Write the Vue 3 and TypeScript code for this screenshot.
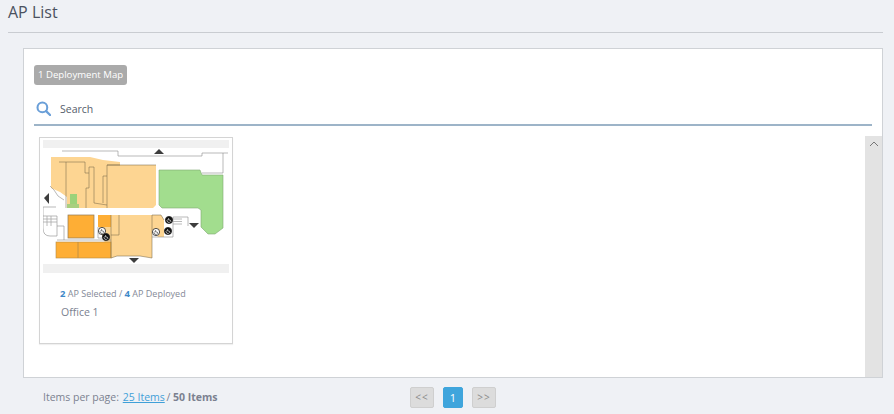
<script setup lang="ts">
const selected = 2
const deployed = 4

// floor plan shapes, coordinates are page pixels of the thumbnail
const lightRooms = [
  '51,157 90,157 103,160 120,162 120,165 156,165 156,205 153,208 67,208 67,197 60,192 51,188',
  '98,225 111,225 111,215 152,215 152,258 140,256 117,256 111,258',
  '152,215 161,215 164,220 164,237 158,237 152,230',
]
const brownWalls = [
  'M59 162H85V173H89M66 162V208M94 167V203M89 173V188H86V208M94 167H89V173',
  'M103 176H107V165H120M103 176V203M94 203L107 205M107 176V208M107 165H156',
  'M111 235H119V215M111 215V258M152 215V258M111 258L117 256H140L152 258M152 215H161L164 220',
]
const outerWalls = [
  'M62 151H118V156H202V153H228M223 153V173H202',
  'M43 207H56M43 207V228Q43 236 50 236H57V226H64V240',
  'M43 216H57V226M57 240H111M98 227V238H110M152 237H173V217H188V226',
  'M50 186L54 190L58 196L64 200',
]
const stairs = [
  { x1: 47, y1: 216, x2: 47, y2: 226 },
  { x1: 51, y1: 216, x2: 51, y2: 226 },
  { x1: 43, y1: 219, x2: 57, y2: 219 },
  { x1: 43, y1: 222, x2: 57, y2: 222 },
  { x1: 173, y1: 219, x2: 182, y2: 219 },
  { x1: 173, y1: 221.5, x2: 182, y2: 221.5 },
  { x1: 173, y1: 224, x2: 182, y2: 224 },
]
const darkArrows = [
  '159,149 154,154 164,154',
  '44,198 49,193 49,204',
  '189,223 199,223 194,228',
  '129,258 139,258 134,263',
]
const icons = [
  { x: 102, y: 231, dark: false },
  { x: 106, y: 237, dark: true },
  { x: 156, y: 232, dark: false },
  { x: 168, y: 231, dark: true },
  { x: 169, y: 220, dark: true },
]
</script>

<template>
  <div class="page">
    <h1 class="title">AP List</h1>
    <div class="panel">
      <span class="badge">1 Deployment Map</span>
      <div class="search">
        <svg class="search-icon" viewBox="0 0 16 16" width="15" height="15">
          <circle cx="6.8" cy="6.8" r="5.2" fill="none" stroke="#6a9fd8" stroke-width="2.2" />
          <path d="M10.8 10.8L15 15" stroke="#6a9fd8" stroke-width="2.4" stroke-linecap="round" />
        </svg>
        <span>Search</span>
      </div>
      <div class="list">
        <div class="cards">
          <div class="card">
            <svg class="map" viewBox="43 140 186 133" width="186" height="133">
              <defs>
                <filter id="soft"><feGaussianBlur stdDeviation="0.35" /></filter>
              </defs>
              <rect x="43" y="140" width="186" height="8" fill="#f0f0f0" />
              <rect x="43" y="264" width="186" height="9" fill="#f0f0f0" />
              <g filter="url(#soft)">
                <polygon v-for="p in lightRooms" :key="p" :points="p" fill="#fdd592" />
                <polygon points="159,170 200,170 202,175 223,175 223,228 215,234 208,234 201,227 201,210 198,208 162,208 159,205" fill="#a2dd8e" stroke="#7fa874" stroke-width="0.6" />
                <rect x="68" y="215" width="26" height="23" fill="#feae36" stroke="#8f7a52" stroke-width="0.7" />
                <rect x="56" y="242" width="55" height="16" fill="#feae36" stroke="#b58a45" stroke-width="0.6" />
                <path d="M78 242V258" stroke="#b58a45" stroke-width="0.8" />
                <rect x="98" y="215" width="13" height="12" fill="#feae36" />
                <rect x="70" y="194" width="7" height="10" fill="#9cd27a" />
                <rect x="67" y="204" width="12" height="4" fill="#a9cf7f" />
                <path v-for="d in brownWalls" :key="d" :d="d" fill="none" stroke="#7a6a4a" stroke-width="0.55" />
                <path v-for="d in outerWalls" :key="d" :d="d" fill="none" stroke="#8c8c8c" stroke-width="0.6" />
                <line v-for="s in stairs" :key="`${s.x1}-${s.y1}`" v-bind="s" stroke="#a8a8a8" stroke-width="0.8" />
                <polygon v-for="a in darkArrows" :key="a" :points="a" fill="#3c3c3c" />
                <template v-for="i in icons" :key="`${i.x}-${i.y}`">
                  <circle :cx="i.x" :cy="i.y" r="3.6" :fill="i.dark ? '#111' : '#fff'" stroke="#222" stroke-width="0.8" />
                  <path :d="`M${i.x - 1.2} ${i.y - 0.6}a1.7 1.7 0 1 0 2.6 2M${i.x - 0.4} ${i.y - 2}v2h1.6l0.8 1.6`" fill="none" :stroke="i.dark ? '#fff' : '#333'" stroke-width="0.6" />
                </template>
              </g>
            </svg>
            <div class="counts">
              <b>{{ selected }}</b> AP Selected / <b>{{ deployed }}</b> AP Deployed
            </div>
            <div class="name">Office 1</div>
          </div>
        </div>
        <div class="scrollbar">
          <svg viewBox="0 0 10 6" width="10" height="6">
            <path d="M1 5L5 1L9 5" fill="none" stroke="#777" stroke-width="1" />
          </svg>
        </div>
      </div>
    </div>
    <div class="footer">
      <div class="per-page">
        Items per page: <a class="link">25 Items</a> / <b>50 Items</b>
      </div>
      <div class="pager">
        <button class="pg" type="button">&lt;&lt;</button>
        <button class="pg active" type="button">1</button>
        <button class="pg" type="button">&gt;&gt;</button>
      </div>
    </div>
  </div>
</template>

<style scoped>
.page {
  height: 414px;
  box-sizing: border-box;
  padding: 0 11px 0 8px;
  overflow: hidden;
  background: #eff1f5;
  font-family: "Open Sans", sans-serif;
  color: #7b8190;
}

.title {
  margin: 0;
  height: 33px;
  box-sizing: border-box;
  padding-top: 2px;
  border-bottom: 1px solid #c9ccd1;
  font-size: 16px;
  line-height: 20px;
  font-weight: 400;
  color: #4b5160;
}

.panel {
  display: flex;
  flex-direction: column;
  align-items: stretch;
  height: 330px;
  box-sizing: border-box;
  margin: 15px 0 0 15px;
  padding: 16px 0 0 10px;
  background: #fff;
  border: 1px solid #cfd2d6;
}

.badge {
  align-self: flex-start;
  height: 20px;
  padding: 0 4px;
  border-radius: 3px;
  background: #aaaaaa;
  color: #fff;
  font-size: 9.6px;
  line-height: 20px;
  white-space: nowrap;
}

.search {
  display: flex;
  align-items: center;
  gap: 9px;
  height: 41px;
  margin-right: 10px;
  padding-left: 2px;
  border-bottom: 2px solid #9db4c8;
  box-sizing: border-box;
  padding-top: 8px;
  font-size: 10.5px;
  color: #555d6b;
}

.search-icon {
  flex: none;
}

.list {
  flex: 1;
  display: flex;
  min-height: 0;
  margin-top: 10px;
}

.cards {
  flex: 1;
  padding: 1px 0 0 5px;
}

.card {
  width: 194px;
  height: 207px;
  box-sizing: border-box;
  padding-top: 2px;
  padding-left: 3px;
  background: #fff;
  border: 1px solid #d4d4d4;
  box-shadow: 0 1px 1px rgba(0, 0, 0, 0.06);
}

.map {
  display: block;
}

.counts {
  margin: 15px 0 0 17px;
  font-size: 9px;
  line-height: 12px;
  color: #858a97;
}

.counts b {
  color: #3f88c8;
  font-size: 9.5px;
}

.name {
  margin: 5px 0 0 18px;
  font-size: 10.5px;
  line-height: 14px;
  color: #7b8190;
}

.scrollbar {
  flex: none;
  display: flex;
  justify-content: center;
  width: 17px;
  padding-top: 5px;
  box-sizing: border-box;
  background: #e3e3e3;
}

.footer {
  display: flex;
  align-items: center;
  height: 38px;
  padding-left: 35px;
}

.per-page {
  width: 367px;
  font-size: 10.5px;
  white-space: nowrap;
}

.per-page b {
  font-weight: 700;
}

.link {
  margin-left: 1px;
  margin-right: -1px;
  color: #3fa0d8;
  text-decoration: underline;
}

.pager {
  display: flex;
  gap: 9px;
}

.pg {
  width: 24px;
  height: 21px;
  padding: 0;
  border: 1px solid #cfcfcf;
  border-radius: 2px;
  background: #dcdcdc;
  color: #8a8a8a;
  font-family: "Open Sans", sans-serif;
  font-size: 10px;
  letter-spacing: 1px;
}

.pg.active {
  width: 20px;
  background: #3fa5dc;
  border-color: #3fa5dc;
  color: #fff;
  font-size: 11px;
  letter-spacing: 0;
}
</style>
